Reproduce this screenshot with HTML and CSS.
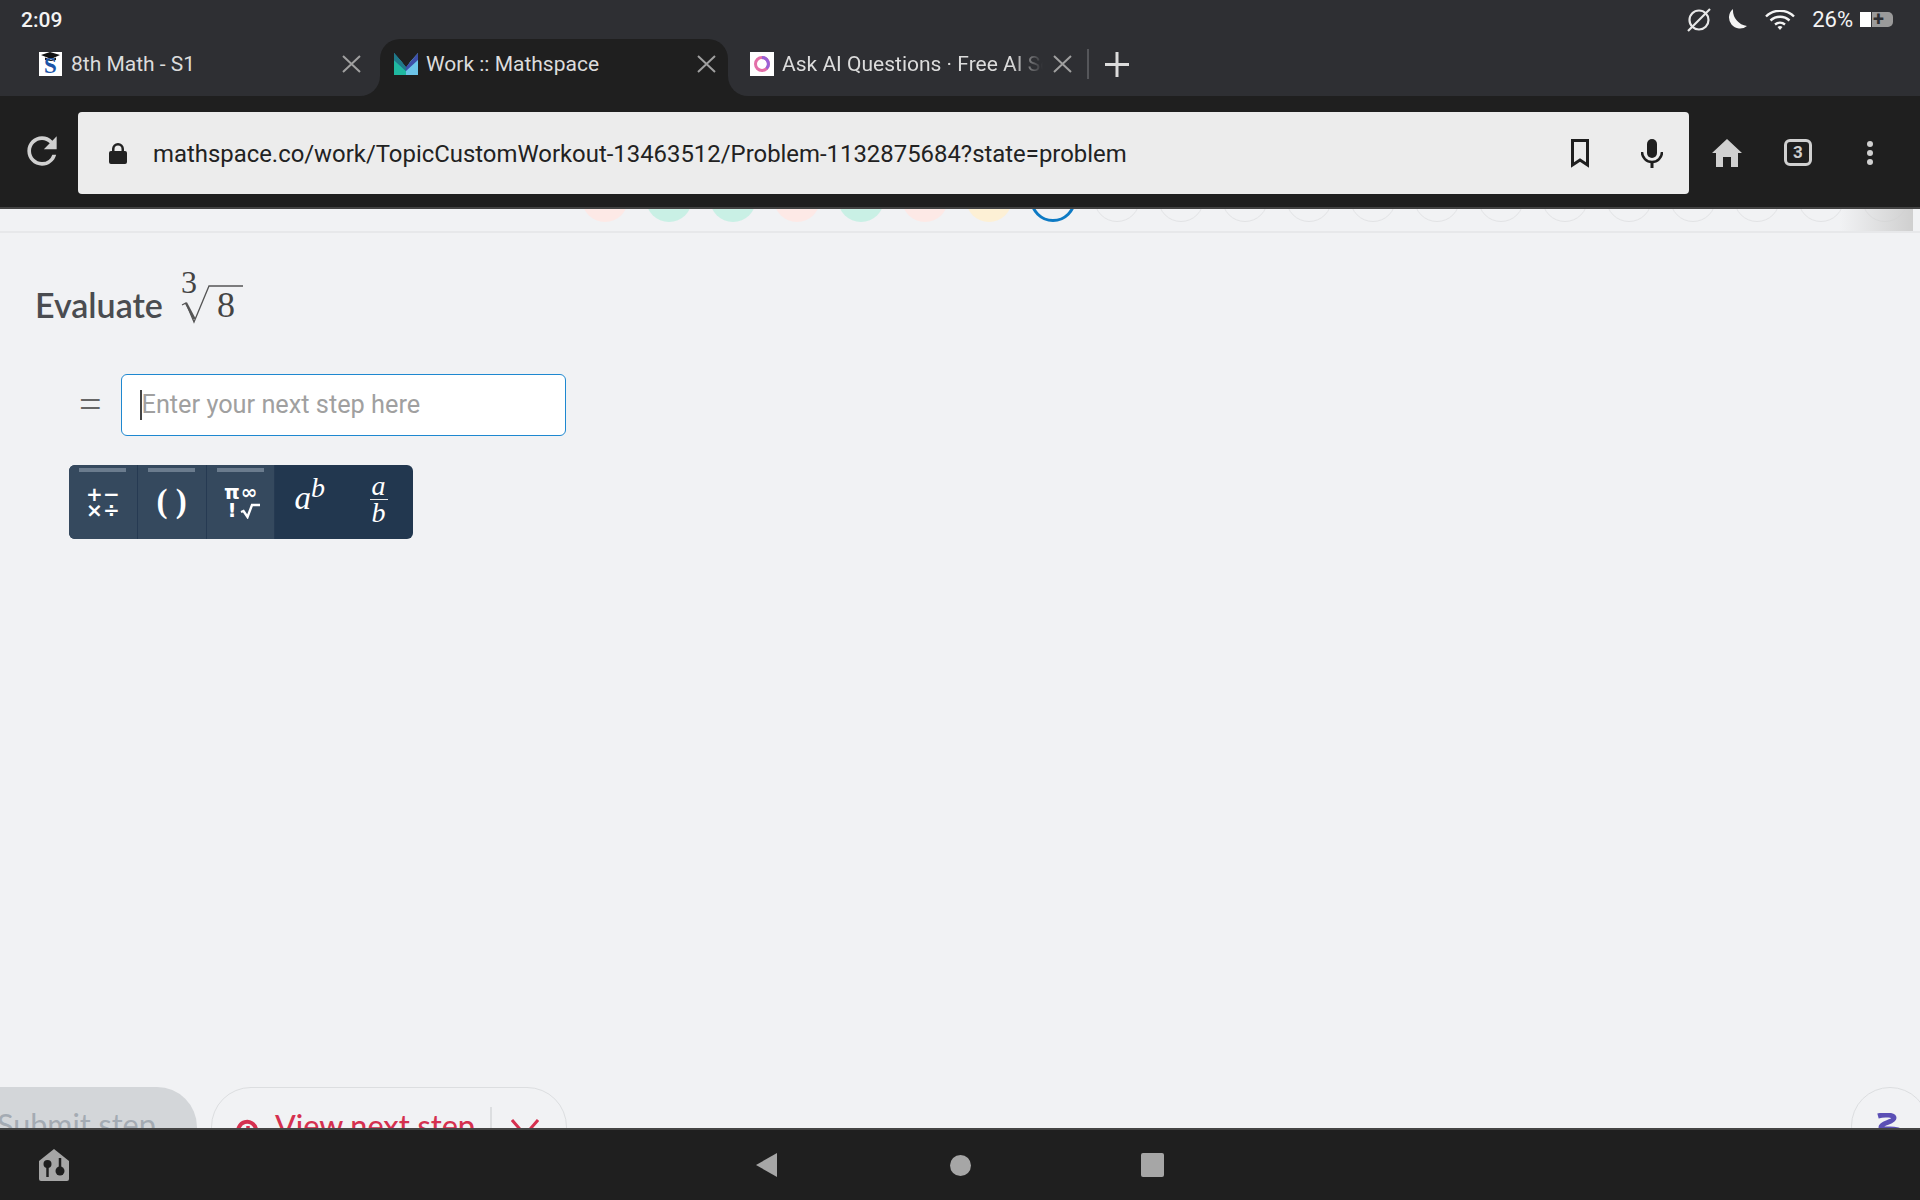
FILE: index.html
```html
<!DOCTYPE html>
<html lang="en">
<head>
    <meta charset="UTF-8">
    <meta name="viewport" content="width=device-width, initial-scale=1.0">
    <title>Work :: Mathspace</title>
    <link rel="stylesheet" href="styles.css">
</head>
<body>

    <div class="status-bar">
        <span class="time">2:09</span>
        <div class="status-icons">
            <svg class="ic-nosign" width="26" height="24" viewBox="0 0 26 24"><circle cx="13" cy="12" r="9.5" fill="none" stroke="#e8e8e8" stroke-width="2.2"/><path d="M2 23 24 1" stroke="#e8e8e8" stroke-width="2.2"/></svg>
            <svg class="ic-moon" width="22" height="22" viewBox="0 0 22 22"><path d="M8 0a11 11 0 1 0 14 17A16 16 0 0 1 8 0z" fill="#f4f4f4"/></svg>
            <svg class="ic-wifi" width="30" height="20" viewBox="0 0 30 20"><g fill="none" stroke="#f4f4f4" stroke-width="2.400"><path d="M1 6.500a20 20 0 0 1 28 0"/><path d="M5.500 10.500a14 14 0 0 1 19 0"/><path d="M10 14.500a8 8 0 0 1 10 0"/></g><path d="M12.500 17a4 4 0 0 1 5 0L15 20z" fill="#f4f4f4"/></svg>
            <span class="battery-text">26%</span>
            <div class="battery">
                <div class="battery-used"></div>
                <div class="battery-rest">+</div>
            </div>
        </div>
    </div>

    <div class="tab-strip">
        <div class="tab tab-first">
            <div class="fav fav-s">
                <svg width="19" height="9" viewBox="0 0 19 9"><path d="M9 0 19 3 10 7 0 3zM4 5.500 10 8 15 5.500V8L10 9 4 8z" fill="#111"/></svg>
                <span>S</span>
            </div>
            <span class="tab-title">8th Math - S1</span>
            <svg class="tab-close" width="19" height="18" viewBox="0 0 19 18"><path d="M1 1 18 17M18 1 1 17" stroke="#a0a0a0" stroke-width="2"/></svg>
        </div>
        <div class="tab-active-wrap">
            <div class="tab tab-active">
                <svg class="fav" width="24" height="24" viewBox="0 0 24 24"><path d="M0 1 8 10 12 16 12 23H0z" fill="#1fb8a0"/><path d="M24 1 16 10 12 16 12 23H24z" fill="#6cc4e8"/><path d="M0 1 12 15 24 1V8L12 19 0 8z" fill="#3d4fa8"/><path d="M0 1 12 15V19L0 8z" fill="#1f7a88"/></svg>
                <span class="tab-title">Work :: Mathspace</span>
                <svg class="tab-close" width="19" height="18" viewBox="0 0 19 18"><path d="M1 1 18 17M18 1 1 17" stroke="#a0a0a0" stroke-width="2"/></svg>
            </div>
        </div>
        <div class="tab tab-last">
            <svg class="fav fav-ai" width="24" height="24" viewBox="0 0 24 24"><rect width="24" height="24" fill="#fff"/><circle cx="12" cy="12" r="6.500" fill="none" stroke="#e36fa8" stroke-width="3"/><path d="M12 5.500a6.500 6.500 0 0 1 4.500 11" fill="none" stroke="#9a62d6" stroke-width="3"/></svg>
            <span class="tab-title tab-title-fade">Ask AI Questions · Free AI Search</span>
            <svg class="tab-close" width="19" height="18" viewBox="0 0 19 18"><path d="M1 1 18 17M18 1 1 17" stroke="#a0a0a0" stroke-width="2"/></svg>
            <div class="tab-sep"></div>
            <svg class="tab-plus" width="24" height="25" viewBox="0 0 24 25"><path d="M12 0v25M0 12.500h24" stroke="#dcdcdc" stroke-width="3"/></svg>
        </div>
    </div>

    <div class="toolbar">
        <div class="reload">
            <svg width="44" height="44" viewBox="0 0 24 24"><path d="M17.650 6.350A7.958 7.958 0 0 0 12 4c-4.420 0-7.990 3.580-7.990 8s3.570 8 7.990 8c3.730 0 6.840-2.550 7.730-6h-2.080A5.990 5.990 0 0 1 12 18c-3.310 0-6-2.690-6-6s2.690-6 6-6c1.660 0 3.140.690 4.220 1.780L13 11h7V4l-2.350 2.350z" fill="#d0d0d0"/></svg>
        </div>
        <div class="url-bar">
            <svg class="lock" width="18" height="21" viewBox="0 0 18 21"><path d="M3 8V6a6 6 0 0 1 12 0v2h1a2 2 0 0 1 2 2v9a2 2 0 0 1-2 2H2a2 2 0 0 1-2-2v-9a2 2 0 0 1 2-2zm2.500 0h7V6a3.500 3.500 0 0 0-7 0z" fill="#222"/></svg>
            <span class="url-text">mathspace.co/work/TopicCustomWorkout-13463512/Problem-1132875684?state=problem</span>
            <svg class="bookmark" width="18" height="29" viewBox="0 0 18 29"><path d="M1.500 1.500h15v24.500L9 21l-7.500 5z" fill="none" stroke="#1f1f1f" stroke-width="3"/></svg>
            <svg class="mic" width="22" height="29" viewBox="0 0 22 29"><rect x="6" y="0" width="10" height="19" rx="5" fill="#1f1f1f"/><path d="M1 13a10 10 0 0 0 20 0" fill="none" stroke="#1f1f1f" stroke-width="2.500"/><path d="M11 22v7" stroke="#1f1f1f" stroke-width="3"/></svg>
        </div>
        <div class="toolbar-right">
            <svg width="30" height="28" viewBox="0 0 30 28"><path d="M15 0 30 14h-4v14h-7V18h-8v10H4V14H0z" fill="#d0d0d0"/></svg>
            <div class="tab-count">3</div>
            <div class="menu-dots"><i></i><i></i><i></i></div>
        </div>
    </div>

    <div class="page">
        <div class="progress-strip">
            <div class="dot dot-red"></div>
            <div class="dot dot-green"></div>
            <div class="dot dot-green"></div>
            <div class="dot dot-red"></div>
            <div class="dot dot-green"></div>
            <div class="dot dot-red"></div>
            <div class="dot dot-yellow"></div>
            <div class="dot dot-current"></div>
            <div class="dot"></div>
            <div class="dot"></div>
            <div class="dot"></div>
            <div class="dot"></div>
            <div class="dot"></div>
            <div class="dot"></div>
            <div class="dot"></div>
            <div class="dot"></div>
            <div class="dot"></div>
            <div class="dot"></div>
            <div class="dot"></div>
            <div class="dot"></div>
            <div class="dot"></div>
            <div class="strip-fade"></div>
        </div>

        <div class="problem">
            <div class="question">
                <span class="evaluate">Evaluate</span>
                <svg class="root" width="62" height="58" viewBox="0 0 62 58">
                    <text x="-1" y="25" class="root-index">3</text>
                    <path d="M0 37 4 35 12 54 27 18H61" fill="none" stroke="#555" stroke-width="1.300"/>
                    <path d="M4 35 12.500 51" fill="none" stroke="#555" stroke-width="2.500"/>
                    <text x="35" y="49" class="root-num">8</text>
                </svg>
            </div>

            <div class="answer">
                <span class="equals">=</span>
                <div class="step-input">
                    <div class="caret"></div>
                    <span class="placeholder">Enter your next step here</span>
                </div>
            </div>

            <div class="keypad">
                <div class="key key-tab">
                    <div class="key-bar"></div>
                    <div class="key-ops"><span>+</span><span>−</span><span>×</span><span>÷</span></div>
                </div>
                <div class="key key-tab">
                    <div class="key-bar"></div>
                    <div class="key-paren">( )</div>
                </div>
                <div class="key key-tab">
                    <div class="key-bar"></div>
                    <div class="key-ops key-sym">
                        <span>π</span><span>∞</span><span>!</span>
                        <svg class="sym-root" width="20" height="16" viewBox="0 0 20 16"><path d="M1 9 3.500 8 7.500 14 12 2H20" fill="none" stroke="#fff" stroke-width="2.400"/></svg>
                    </div>
                </div>
                <div class="key key-plain">
                    <div class="key-pow">a<sup>b</sup></div>
                </div>
                <div class="key key-plain">
                    <div class="key-frac"><span>a</span><span class="frac-b">b</span></div>
                </div>
            </div>
        </div>

        <div class="actions">
            <div class="btn-submit">Submit step</div>
            <div class="btn-view">
                <svg width="26" height="26" viewBox="0 0 26 26"><path d="M21 11a9 9 0 1 0-5 10" fill="none" stroke="#d5304f" stroke-width="4"/><path d="M13 8v6l8 6" fill="none" stroke="#d5304f" stroke-width="3.500"/></svg>
                <span class="view-label">View next step</span>
                <div class="view-sep"></div>
                <svg class="view-chev" width="28" height="18" viewBox="0 0 28 18"><path d="M1 1 14 16 27 1" fill="none" stroke="#d5304f" stroke-width="3"/></svg>
            </div>
            <div class="btn-help">
                <svg width="30" height="28" viewBox="0 0 30 28"><path d="M3 3C10 1 19 2 19 5 19 9 6 10 6 14 6 18 25 14 25 19 25 24 10 24 8 26" fill="none" stroke="#5b4fb5" stroke-width="5"/></svg>
            </div>
        </div>
    </div>

    <div class="nav-bar">
        <div class="nav-left">
            <svg width="30" height="32" viewBox="0 0 30 32"><path d="M15 0 30 12v18a2 2 0 0 1-2 2H2a2 2 0 0 1-2-2V12z" fill="#a6a6a6"/><circle cx="8.500" cy="15" r="4" fill="#1f1f1f"/><path d="M8.500 15v13" stroke="#1f1f1f" stroke-width="2.500"/><circle cx="21" cy="22" r="4.500" fill="#1f1f1f"/><path d="M21 9v13" stroke="#1f1f1f" stroke-width="2.500"/></svg>
        </div>
        <div class="nav-center">
            <svg width="21" height="24" viewBox="0 0 21 24"><path d="M21 0v24L0 12z" fill="#a6a6a6"/></svg>
            <div class="nav-circle"></div>
            <div class="nav-square"></div>
        </div>
    </div>

</body>
</html>
```

FILE: styles.css
```css
* {
    box-sizing: border-box;
}
body {
    margin: 0;
    width: 1920px;
    height: 1200px;
    overflow: hidden;
    display: flex;
    flex-direction: column;
    background-color: #f1f2f4;
    font-family: Roboto, sans-serif;
}

/* status bar */
.status-bar {
    height: 39px;
    flex: none;
    background-color: #2e2f33;
    display: flex;
    align-items: center;
    padding: 0 27px 0 21px;
    color: #f4f4f4;
}
.time {
    font-size: 21px;
    font-weight: 500;
}
.status-icons {
    margin-left: auto;
    display: flex;
    align-items: center;
}
.ic-nosign {
    margin-right: 13px;
}
.ic-moon {
    margin-right: 18px;
}
.ic-wifi {
    margin-right: 17px;
}
.battery-text {
    font-size: 22px;
    margin-right: 7px;
}
.battery {
    display: flex;
    width: 33px;
    height: 15px;
}
.battery-used {
    width: 11px;
    background-color: #fff;
}
.battery-rest {
    flex: 1;
    background-color: #9a9a9a;
    border-radius: 0 5px 5px 0;
    margin-left: 1px;
    color: #2e2f33;
    font-size: 20px;
    font-weight: 700;
    line-height: 15px;
    padding-left: 1px;
}

/* tabs */
.tab-strip {
    height: 57px;
    flex: none;
    display: flex;
    background-color: #1f1f1f;
}
.tab {
    display: flex;
    align-items: center;
    height: 57px;
    padding-bottom: 7px;
    font-size: 21px;
    color: #dcdcdc;
}
.tab-first {
    width: 380px;
    padding-left: 39px;
    padding-right: 19px;
    background-color: #2e2f33;
    border-bottom-right-radius: 20px;
}
.tab-active-wrap {
    width: 348px;
    background-color: #2e2f33;
}
.tab-active {
    padding-left: 14px;
    padding-right: 12px;
    background-color: #1f1f1f;
    border-radius: 20px 20px 0 0;
}
.tab-last {
    flex: 1;
    padding-left: 22px;
    background-color: #2e2f33;
    border-bottom-left-radius: 20px;
}
.fav {
    flex: none;
    margin-right: 8px;
}
.fav-s {
    width: 23px;
    height: 24px;
    margin-right: 9px;
    background-color: #fff;
    display: flex;
    flex-direction: column;
    align-items: center;
}
.fav-s svg {
    flex: none;
    margin-bottom: -6px;
}
.fav-s span {
    font-family: "Liberation Serif", serif;
    font-weight: 700;
    font-size: 23px;
    line-height: 21px;
    color: #1c55a8;
}
.tab-title {
    white-space: nowrap;
}
.tab-close {
    margin-left: auto;
    flex: none;
}
.tab-title-fade {
    width: 261px;
    overflow: hidden;
    -webkit-mask-image: linear-gradient(to right, #000 88%, transparent 100%);
    mask-image: linear-gradient(to right, #000 88%, transparent 100%);
}
.tab-last .tab-close {
    margin-left: 10px;
}
.tab-sep {
    width: 2px;
    height: 30px;
    background-color: #55565a;
    margin-left: 15px;
}
.tab-plus {
    margin-left: 16px;
}

/* toolbar */
.toolbar {
    height: 113px;
    flex: none;
    display: flex;
    padding-top: 16px;
    background-color: #1f1f1f;
    border-bottom: 2px solid #444;
}
.reload {
    width: 78px;
    height: 82px;
    flex: none;
    display: flex;
    align-items: center;
    justify-content: center;
    padding-left: 6px;
    padding-bottom: 4px;
}
.url-bar {
    width: 1611px;
    height: 82px;
    background-color: #ececec;
    border-radius: 4px;
    display: flex;
    align-items: center;
    padding-left: 31px;
}
.lock {
    flex: none;
    margin-right: 26px;
}
.url-text {
    font-size: 23.900px;
    padding-top: 1px;
    color: #222;
    white-space: nowrap;
}
.bookmark {
    margin-left: auto;
    flex: none;
}
.mic {
    flex: none;
    margin-left: 52px;
    margin-right: 26px;
}
.toolbar-right {
    flex: 1;
    height: 82px;
    display: flex;
    align-items: center;
    padding-left: 23px;
}
.tab-count {
    width: 28px;
    height: 27px;
    margin-left: 42px;
    margin-bottom: 2px;
    border: 3px solid #d0d0d0;
    border-radius: 6px;
    color: #d0d0d0;
    font-size: 17px;
    font-weight: 700;
    display: flex;
    align-items: center;
    justify-content: center;
}
.menu-dots {
    margin-left: 55px;
    display: flex;
    flex-direction: column;
    gap: 3px;
}
.menu-dots i {
    display: block;
    width: 6px;
    height: 6px;
    border-radius: 50%;
    background-color: #d0d0d0;
}

/* page */
.page {
    flex: 1;
    min-height: 0;
    display: flex;
    flex-direction: column;
    overflow: hidden;
    background-color: #f1f2f4;
}
.progress-strip {
    height: 24px;
    flex: none;
    position: relative;
    display: flex;
    align-items: flex-end;
    gap: 18px;
    padding: 0 0 9px 582px;
    overflow: hidden;
    border-bottom: 2px solid #e7e8ea;
}
.dot {
    flex: none;
    width: 46px;
    height: 46px;
    border-radius: 50%;
    border: 1.5px solid #e2e3e5;
}
.dot-red {
    background-color: #fde9e6;
    border: none;
}
.dot-green {
    background-color: #c9f0e5;
    border: none;
}
.dot-yellow {
    background-color: #fdf0d5;
    border: none;
}
.dot-current {
    border: 3px solid #0d7ac4;
}
.strip-fade {
    position: absolute;
    top: 0;
    bottom: 0;
    right: 7px;
    width: 73px;
    background: linear-gradient(to right, rgba(208, 208, 208, 0), #cfcfcf);
}
.problem {
    padding: 35px 0 0 35px;
}
.question {
    display: flex;
    align-items: flex-end;
    height: 58px;
}
.evaluate {
    font-family: Lato, sans-serif;
    font-weight: 600;
    font-size: 34px;
    line-height: 40px;
    color: #4a4c50;
    margin-right: 19px;
    margin-bottom: 1px;
}
.root {
    flex: none;
    overflow: visible;
}
.root text {
    font-family: "Liberation Serif", serif;
    fill: #444;
}
.root-index {
    font-size: 32px;
}
.root-num {
    font-size: 36px;
}
.answer {
    display: flex;
    align-items: center;
    margin-top: 48px;
    padding-left: 44px;
}
.equals {
    font-family: "Liberation Serif", serif;
    font-size: 40px;
    line-height: 44px;
    color: #666;
    width: 42px;
}
.step-input {
    width: 445px;
    height: 62px;
    background-color: #fff;
    border: 1.5px solid #1e88d0;
    border-radius: 6px;
    display: flex;
    align-items: center;
    padding-left: 18px;
}
.caret {
    width: 1.5px;
    height: 30px;
    background-color: #444;
}
.placeholder {
    font-size: 25.300px;
    margin-bottom: 1px;
    color: #a0a0a0;
}

/* math keypad */
.keypad {
    display: flex;
    width: 344px;
    height: 74px;
    margin-top: 29px;
    margin-left: 34px;
    border-radius: 6px;
    overflow: hidden;
    color: #fff;
    background-color: #22374f;
}
.key {
    width: 68.800px;
    display: flex;
    flex-direction: column;
    align-items: center;
}
.key-tab {
    background-color: #35495e;
    border-right: 1.5px solid #263a52;
}
.key-bar {
    width: 47px;
    height: 4px;
    margin-top: 3px;
    background-color: #6b7c8e;
}
.key-ops {
    display: grid;
    grid-template-columns: 17px 17px;
    margin-top: 14px;
    font-family: "DejaVu Sans", sans-serif;
    font-weight: 700;
    font-size: 20px;
    line-height: 16px;
    text-align: center;
}
.key-sym {
    margin-top: 11px;
    line-height: 18px;
}
.sym-root {
    margin-top: 2px;
}
.key-paren {
    margin-top: 11px;
    font-family: "Liberation Serif", serif;
    font-weight: 700;
    font-size: 33px;
    line-height: 36px;
}
.key-pow {
    margin-top: 13px;
    font-family: "Liberation Serif", serif;
    font-style: italic;
    font-size: 33px;
    line-height: 40px;
}
.key-pow sup {
    font-size: 28px;
    line-height: 0;
    vertical-align: 12px;
}
.key-frac {
    margin-top: 8px;
    font-family: "Liberation Serif", serif;
    font-style: italic;
    font-size: 28px;
    line-height: 26px;
    display: flex;
    flex-direction: column;
    align-items: center;
}
.frac-b {
    width: 18px;
    text-align: center;
    border-top: 1.5px solid #e8e8e8;
}

/* bottom buttons, cut off by the nav bar */
.actions {
    margin-top: auto;
    height: 41px;
    flex: none;
    display: flex;
    gap: 14px;
    font-family: Lato, sans-serif;
    font-size: 30.500px;
}
.btn-submit {
    width: 237px;
    height: 80px;
    margin-left: -40px;
    padding: 19px 0 0 37px;
    flex: none;
    white-space: nowrap;
    background-color: #d3d6d9;
    color: #a4abb3;
    border-radius: 40px;
}
.btn-view {
    width: 356px;
    height: 80px;
    flex: none;
    display: flex;
    align-items: flex-start;
    padding: 19px 0 0 23px;
    border: 1.5px solid #dcdee0;
    border-radius: 40px;
    color: #d5304f;
    white-space: nowrap;
}
.btn-view svg {
    flex: none;
    margin-top: 11px;
}
.view-label {
    margin-left: 14px;
    font-weight: 500;
}
.view-sep {
    width: 2px;
    height: 40px;
    margin-left: 15px;
    background-color: #dcdee0;
}
.btn-view .view-chev {
    margin-left: 19px;
    margin-top: 12px;
}
.btn-help {
    width: 78px;
    height: 78px;
    flex: none;
    margin-left: auto;
    margin-right: -9px;
    padding: 23px 0 0 23px;
    border: 1.5px solid #dcdee0;
    border-radius: 50%;
}

/* android nav bar */
.nav-bar {
    height: 72px;
    flex: none;
    background-color: #1f1f1f;
    border-top: 2px solid #444;
    display: flex;
    align-items: center;
}
.nav-left {
    width: 756px;
    padding-left: 39px;
    display: flex;
}
.nav-center {
    display: flex;
    align-items: center;
}
.nav-circle {
    width: 21px;
    height: 21px;
    margin-left: 173px;
    border-radius: 50%;
    background-color: #a6a6a6;
}
.nav-square {
    width: 23px;
    height: 24px;
    margin-left: 170px;
    border-radius: 2px;
    background-color: #a6a6a6;
}
```
